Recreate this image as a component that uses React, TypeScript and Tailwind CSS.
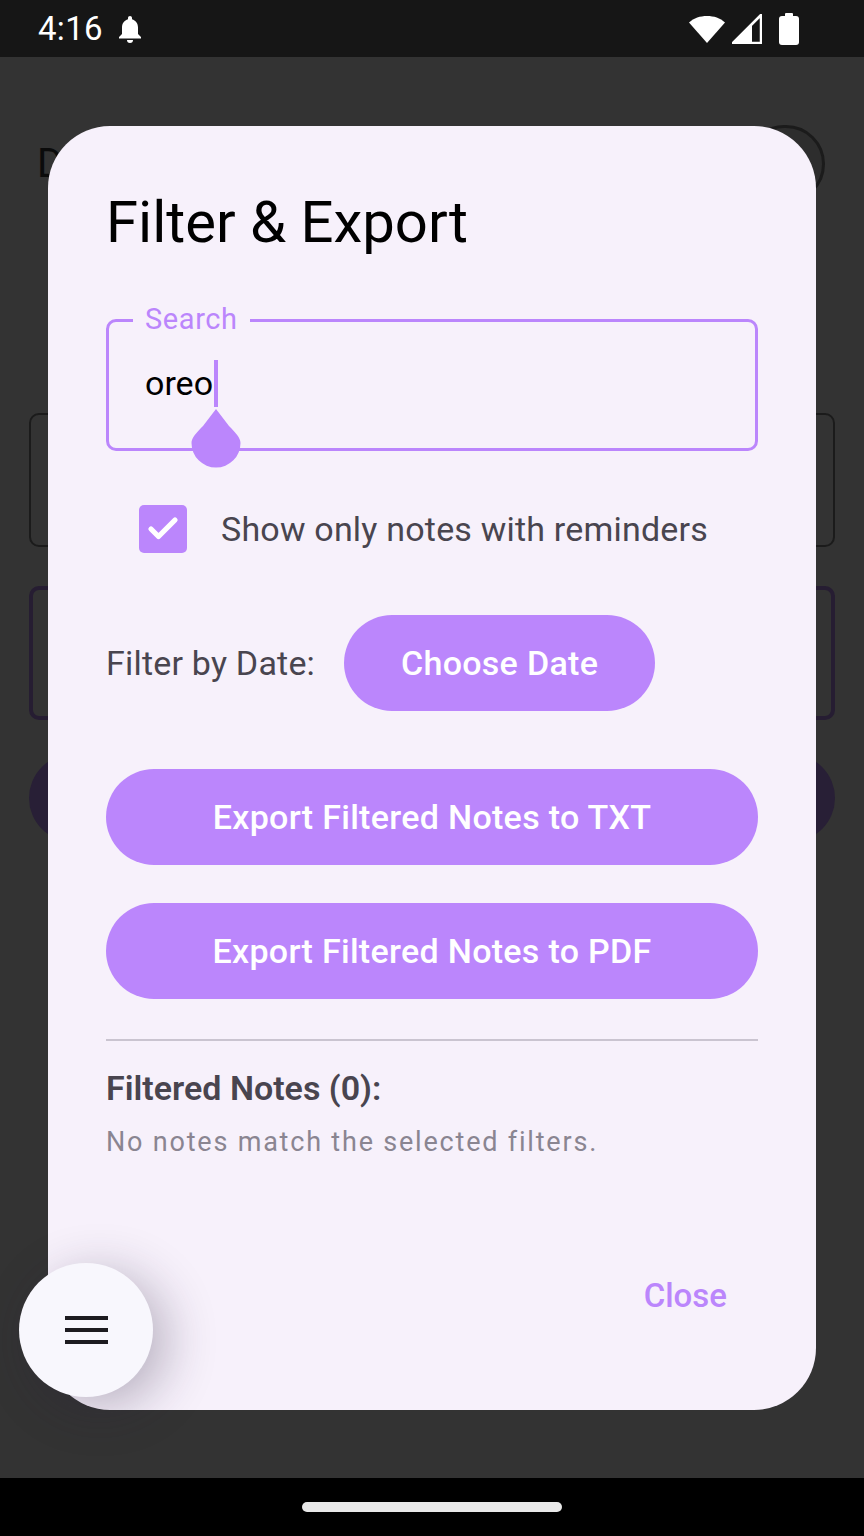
import { Check } from 'lucide-react'

function StatusBar() {
  return (
    <div className="h-[57px] bg-[#161616] flex items-center justify-between pl-[38px] pr-[64px]">
      <div className="flex items-center gap-[14px]">
        <span className="text-white text-[33px] leading-none tracking-[0.3px]">4:16</span>
        {/* bell */}
        <svg width="26" height="30" viewBox="0 0 26 30">
          <path d="M13 2c1.2 0 2 .8 2 2v1.2c3.6 1 6 4.2 6 8.2V20l3 3v1.5H2V23l3-3v-6.6c0-4 2.4-7.2 6-8.2V4c0-1.2.8-2 2-2z" fill="#fff" />
          <path d="M10 26h6a3 3 0 0 1-6 0z" fill="#fff" />
        </svg>
      </div>
      <div className="flex items-center gap-[6px]">
        {/* wifi wedge */}
        <svg width="38" height="30" viewBox="0 0 38 30">
          <path d="M19 29L1 8.5C6 4 12 2 19 2s13 2 18 6.5z" fill="#fff" />
        </svg>
        {/* signal */}
        <svg width="30" height="30" viewBox="0 0 30 30">
          <path d="M29 1v28H1z" fill="none" stroke="#fff" strokeWidth="2.5" strokeLinejoin="round" />
          <path d="M2 28.5L20 10.5v18z" fill="#fff" />
        </svg>
        {/* battery */}
        <svg width="22" height="32" viewBox="0 0 22 32" className="ml-[10px]">
          <rect x="7" y="0" width="8" height="4" rx="1" fill="#fff" />
          <rect x="1" y="3" width="20" height="29" rx="3" fill="#fff" />
        </svg>
      </div>
    </div>
  )
}

function BackgroundPage() {
  return (
    <div className="flex-1 bg-[#333333] px-[29px] flex flex-col">
      {/* header */}
      <div className="mt-[68px] h-[78px] flex items-center justify-between">
        <span className="pl-[8px] text-[40px] text-[#0b0b0b]">Daily Notes</span>
        <div className="w-[80px] h-[78px] rounded-full bg-[#2d2d2d] border-[3px] border-[#1b1b1b] mr-[10px]" />
      </div>

      {/* outlined input */}
      <div className="mt-[210px] h-[134px] rounded-[10px] border-[2px] border-[#1b1b1b]" />

      {/* outlined purple input */}
      <div className="mt-[39px] h-[134px] rounded-[10px] border-[4px] border-[#261d32]" />

      {/* dimmed button */}
      <div className="mt-[34px] h-[88px] rounded-full bg-[#281f36]" />
    </div>
  )
}

function SearchField() {
  return (
    <div className="relative h-[132px] rounded-[10px] border-[3px] border-[#bb86fc]">
      <span className="absolute left-[24px] top-[-20px] px-[12px] bg-[#f7f1fb] text-[29px] leading-[34px] tracking-[0.6px] text-[#bb86fc]">
        Search
      </span>
      <div className="pl-[36px] pt-[39px] flex items-start">
        <span className="text-[34px] leading-[44px] text-black">oreo</span>
        <span className="relative w-[4px] h-[47px] bg-[#bb86fc] ml-[1px] mt-[-1px]">
          {/* text cursor handle */}
          <svg width="50" height="60" viewBox="0 0 50 60" className="absolute left-[-23px] top-[48px]">
            <path d="M25 1 L38 18 C45 25 49.5 30 49.5 35 A24.5 24.5 0 0 1 0.5 35 C0.5 30 5 25 12 18 Z" fill="#bb86fc" />
          </svg>
        </span>
      </div>
    </div>
  )
}

function PillButton({ label, className }: { label: string; className?: string }) {
  return (
    <button className={`h-[96px] rounded-full bg-[#bb86fc] text-white text-[34px] font-medium tracking-[0.3px] flex items-center justify-center ${className ?? ''}`}>
      {label}
    </button>
  )
}

function FilterDialog() {
  return (
    <div className="mx-[48px] mt-[69px] h-[1284px] rounded-[62px] bg-[#f7f1fb] px-[58px] pt-[62px] flex flex-col">
      {/* TITLE */}
      <h1 className="text-[58px] leading-[68px] text-black font-normal">Filter &amp; Export</h1>

      {/* SEARCH */}
      <div className="mt-[63px]">
        <SearchField />
      </div>

      {/* REMINDER CHECKBOX */}
      <div className="mt-[54px] flex items-center pl-[33px]">
        <div className="w-[48px] h-[48px] rounded-[5px] bg-[#bb86fc] flex items-center justify-center">
          <Check className="w-[36px] h-[36px] text-white" strokeWidth={3.5} />
        </div>
        <span className="ml-[34px] text-[34px] leading-[44px] text-[#49454f] tracking-[0.2px]">
          Show only notes with reminders
        </span>
      </div>

      {/* DATE */}
      <div className="mt-[62px] flex items-center">
        <span className="text-[34px] leading-[44px] text-[#49454f] tracking-[0.2px]">Filter by Date:</span>
        <PillButton label="Choose Date" className="ml-[29px] w-[311px]" />
      </div>

      {/* EXPORTS */}
      <PillButton label="Export Filtered Notes to TXT" className="mt-[58px] w-full" />
      <PillButton label="Export Filtered Notes to PDF" className="mt-[38px] w-full" />

      {/* DIVIDER */}
      <div className="mt-[40px] h-[2px] bg-[#cac4d0]" />

      {/* RESULTS */}
      <h2 className="mt-[28px] text-[34px] leading-[39px] font-semibold text-[#49454f]">Filtered Notes (0):</h2>
      <p className="mt-[19px] text-[27px] leading-[31px] text-[#8a8591] tracking-[1.8px]">
        No notes match the selected filters.
      </p>

      {/* ACTIONS */}
      <div className="mt-[118px] flex justify-end pr-[31px]">
        <button className="text-[33px] leading-[39px] font-medium text-[#bb86fc]">Close</button>
      </div>
    </div>
  )
}

export default function App() {
  return (
    <div
      className="relative w-[864px] h-[1536px] overflow-hidden flex flex-col bg-[#333333]"
      style={{ fontFamily: 'Roboto, "Noto Sans", sans-serif' }}
    >
      <StatusBar />
      <BackgroundPage />

      {/* NAV BAR */}
      <div className="h-[58px] bg-black flex items-center justify-center">
        <div className="w-[260px] h-[10px] rounded-full bg-[#e9e9e9]" />
      </div>

      {/* DIALOG OVERLAY */}
      <div className="absolute left-0 right-0 top-[57px]">
        <FilterDialog />
      </div>

      {/* FAB */}
      <button className="absolute left-[19px] top-[1263px] w-[134px] h-[134px] rounded-full bg-[#f8f7fd] shadow-[14px_10px_50px_rgba(40,30,60,0.3)] flex flex-col items-center justify-center gap-[7.5px]">
        <span className="w-[43px] h-[4.5px] bg-[#1d1b20]" />
        <span className="w-[43px] h-[4.5px] bg-[#1d1b20]" />
        <span className="w-[43px] h-[4.5px] bg-[#1d1b20]" />
      </button>
    </div>
  )
}
